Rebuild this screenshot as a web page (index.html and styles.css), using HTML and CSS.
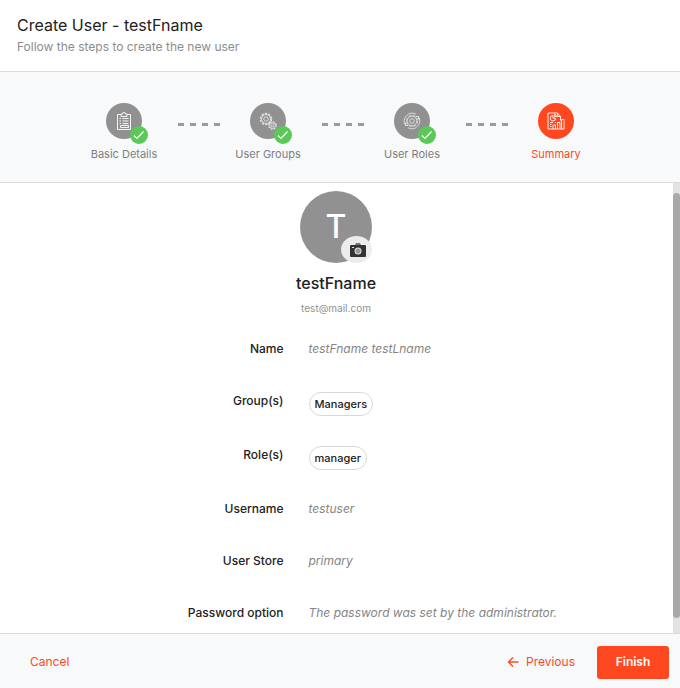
FILE: index.html
```html
<!DOCTYPE html>
<html lang="en">
<head>
<meta charset="utf-8">
<meta name="viewport" content="width=device-width, initial-scale=1">
<title>Create User</title>
<link rel="stylesheet" href="styles.css">
</head>
<body>
<div class="wizard">
  <header class="header">
    <h1 class="title">Create User - testFname</h1>
    <p class="subtitle">Follow the steps to create the new user</p>
  </header>

  <ol class="steps">
    <li class="step">
      <div class="step-icon">
        <svg class="glyph" viewBox="0 0 20 20"><path d="M7 3.500H3.500v15h13v-15H13M7 3h1.500a1.500 1.500 0 0 1 3 0H13v2.500H7zM5.500 7.500h1.500M8.500 7.500h6M5.500 10h1.500M8.500 10h6M5.500 12.500h1.500M8.500 12.500h6M6.500 14.500h8v2h-8z"/></svg>
        <svg class="check" viewBox="0 0 18 18"><path d="M4 9.500 7 12.500 13.500 5.500"/></svg>
      </div>
      <span>Basic Details</span>
    </li>
    <li class="connector" aria-hidden="true"></li>
    <li class="step">
      <div class="step-icon">
        <svg class="glyph faint" viewBox="0 0 20 20"><circle cx="8" cy="8" r="5.500" stroke-dasharray="2.200 1.250" stroke-width="1.500"/><circle cx="8" cy="8" r="4.500"/><circle cx="8" cy="8" r="2.200"/><circle cx="14.500" cy="14.500" r="3.700" stroke-dasharray="1.600 1.300" stroke-width="1.300"/><circle cx="14.500" cy="14.500" r="2.900"/><circle cx="14.500" cy="14.500" r="1.200"/></svg>
        <svg class="check" viewBox="0 0 18 18"><path d="M4 9.500 7 12.500 13.500 5.500"/></svg>
      </div>
      <span>User Groups</span>
    </li>
    <li class="connector" aria-hidden="true"></li>
    <li class="step">
      <div class="step-icon">
        <svg class="glyph faint" viewBox="0 0 20 20"><path d="M3.500 14.500A8 8 0 0 1 14 3.200M16.500 5.500A8 8 0 0 1 6 16.800M3.500 14.500v-3M3.500 14.500H6.200M16.500 5.500v3M16.500 5.500h-2.700"/><circle cx="10" cy="10" r="5.600" stroke-dasharray="2.600 1.800"/><circle cx="10" cy="10" r="4.900"/><circle cx="10" cy="10" r="2.300"/></svg>
        <svg class="check" viewBox="0 0 18 18"><path d="M4 9.500 7 12.500 13.500 5.500"/></svg>
      </div>
      <span>User Roles</span>
    </li>
    <li class="connector" aria-hidden="true"></li>
    <li class="step current" aria-current="step">
      <div class="step-icon">
        <svg class="glyph" viewBox="0 0 20 20"><path d="M14.500 9.500V5.500l-3-3.500h-9.500v16h16v-9.500h-2.500V18M11.500 2v3.500h3M14 18v-6.500h-2.500V18M9.500 18v-4H7v4M4 11.500h3M4 13.500h1.500M4 15.500h1.500M9 11.500h1M7 4.500a2.700 2.700 0 1 0 2.700 2.700H7zM8.500 3.500a2 2 0 0 1 2 2h-2z"/></svg>
      </div>
      <span>Summary</span>
    </li>
  </ol>

  <main class="body">
    <div class="summary">
      <div class="profile">
        <div class="avatar">T
          <button class="camera" type="button" aria-label="Change picture">
            <svg viewBox="0 0 16 14"><path d="M6 0h4l1 2H5z" fill="#777"/><rect y="2" width="16" height="12" rx="1" fill="#333"/><path d="M2 4h2v1H2z" fill="#ddd"/><circle cx="8" cy="8" r="3.500" fill="#ddd"/><circle cx="8" cy="8" r="2.500" fill="#999"/></svg>
          </button>
        </div>
        <h2 class="name">testFname</h2>
        <p class="email">test@mail.com</p>
      </div>
      <dl class="details">
        <div class="row"><dt>Name</dt><dd>testFname testLname</dd></div>
        <div class="row row-chips"><dt>Group(s)</dt><dd><span class="chip">Managers</span></dd></div>
        <div class="row row-chips"><dt>Role(s)</dt><dd><span class="chip">manager</span></dd></div>
        <div class="row"><dt>Username</dt><dd>testuser</dd></div>
        <div class="row"><dt>User Store</dt><dd>primary</dd></div>
        <div class="row"><dt>Password option</dt><dd>The password was set by the administrator.</dd></div>
      </dl>
    </div>
    <div class="scrollbar" aria-hidden="true"><div class="thumb"></div></div>
  </main>

  <footer class="footer">
    <button class="link" type="button">Cancel</button>
    <div class="actions">
      <button class="link" type="button">
        <svg viewBox="0 0 12 12"><path d="M11.500 6H2M6 1.500 1.500 6 6 10.500"/></svg>
        Previous
      </button>
      <button class="primary" type="button">Finish</button>
    </div>
  </footer>
</div>
</body>
</html>
```

FILE: styles.css
```css
* {
  box-sizing: border-box;
}

body,
h1,
h2,
p,
ol,
dl,
dd {
  margin: 0;
  padding: 0;
}

body {
  font-family: Inter, "Liberation Sans", sans-serif;
  font-size: 12px;
  line-height: 18px;
  color: #222;
  background: #fff;
}

button {
  font: inherit;
  border: 0;
  cursor: pointer;
}

.wizard {
  display: flex;
  flex-direction: column;
  height: 100vh;
}

.header {
  padding: 15px 17px;
  border-bottom: 1px solid #d9dbdb;
}

.title {
  font-size: 16px;
  line-height: 20px;
  font-weight: 400;
}

.subtitle {
  margin-top: 2px;
  line-height: 19px;
  color: #8d8d8d;
}

.steps {
  display: flex;
  justify-content: center;
  padding: 31px 0 19px;
  list-style: none;
  background: #f8f9fa;
  border-bottom: 1px solid #d9dbdb;
}

.step {
  display: flex;
  flex-direction: column;
  align-items: center;
  gap: 6px;
  width: 102px;
  font-size: 11px;
  color: #7e7e7e;
}

.step-icon {
  position: relative;
  display: grid;
  place-items: center;
  width: 36px;
  height: 36px;
  border-radius: 50%;
  background: #919191;
}

.glyph {
  width: 20px;
  height: 20px;
  fill: none;
  stroke: #fff;
  stroke-width: 0.9;
}

.faint {
  opacity: 0.75;
}

.check {
  position: absolute;
  right: -6px;
  bottom: -5px;
  width: 18px;
  height: 18px;
  border-radius: 50%;
  background: #5bc957;
  fill: none;
  stroke: #fff;
  stroke-width: 1.2;
}

.current {
  color: #ff481f;
}

.current .step-icon {
  background: #ff481f;
}

.connector {
  width: 42px;
  height: 3px;
  margin: 20px -3px 0 3px;
  background: repeating-linear-gradient(90deg, #999 0 6px, transparent 6px 12px);
}

.body {
  display: flex;
  flex: 1;
  min-height: 0;
}

.summary {
  flex: 1;
  min-width: 0;
  overflow: hidden;
}

.profile {
  display: flex;
  flex-direction: column;
  align-items: center;
  padding: 8px 1px 23px 0;
}

.avatar {
  position: relative;
  display: grid;
  place-items: center;
  width: 72px;
  height: 72px;
  border-radius: 50%;
  background: #919191;
  color: #fff;
  font-size: 32px;
  font-weight: 500;
}

.camera {
  position: absolute;
  right: 0;
  bottom: 0;
  display: grid;
  place-items: center;
  width: 31px;
  height: 27px;
  padding: 0 0 0 2px;
  border-radius: 50%;
  background: #ececec;
}

.camera svg {
  width: 16px;
  height: 14px;
}

.name {
  margin-top: 8px;
  font-size: 16px;
  line-height: 24px;
  font-weight: 500;
}

.email {
  margin-top: 4px;
  font-size: 10px;
  color: #919191;
}

.row {
  display: grid;
  grid-template-columns: 7fr 9fr;
  column-gap: 25px;
  align-items: start;
  min-height: 52px;
}

.row-chips {
  min-height: 54px;
}

dt {
  font-weight: 500;
  text-align: right;
}

dd {
  font-style: italic;
  color: #858585;
}

.chip {
  display: inline-block;
  padding: 0 5px;
  border: 1px solid #d9d9d9;
  border-radius: 12px;
  font-size: 11px;
  line-height: 22px;
  font-style: normal;
  font-weight: 500;
  color: #222;
}

.scrollbar {
  width: 7px;
  padding: 10px 0 15px;
  background: #e3e3e3;
}

.thumb {
  height: 100%;
  border-radius: 4px;
  background: #a9a9a9;
}

.footer {
  display: flex;
  justify-content: space-between;
  align-items: center;
  padding: 12px 11px 9px 30px;
  border-top: 1px solid #d9dbdb;
  background: #f8f9fa;
}

.actions {
  display: flex;
  align-items: center;
  gap: 22px;
}

.link {
  display: flex;
  align-items: center;
  gap: 7px;
  padding: 0 0 2px;
  background: none;
  color: #ff481f;
}

.link svg {
  width: 12px;
  height: 12px;
  fill: none;
  stroke: #ff481f;
  stroke-width: 1.4;
}

.primary {
  min-width: 72px;
  padding: 7px 16px 8px;
  border-radius: 3px;
  background: #ff481f;
  color: #fff;
  font-weight: 600;
}
```
